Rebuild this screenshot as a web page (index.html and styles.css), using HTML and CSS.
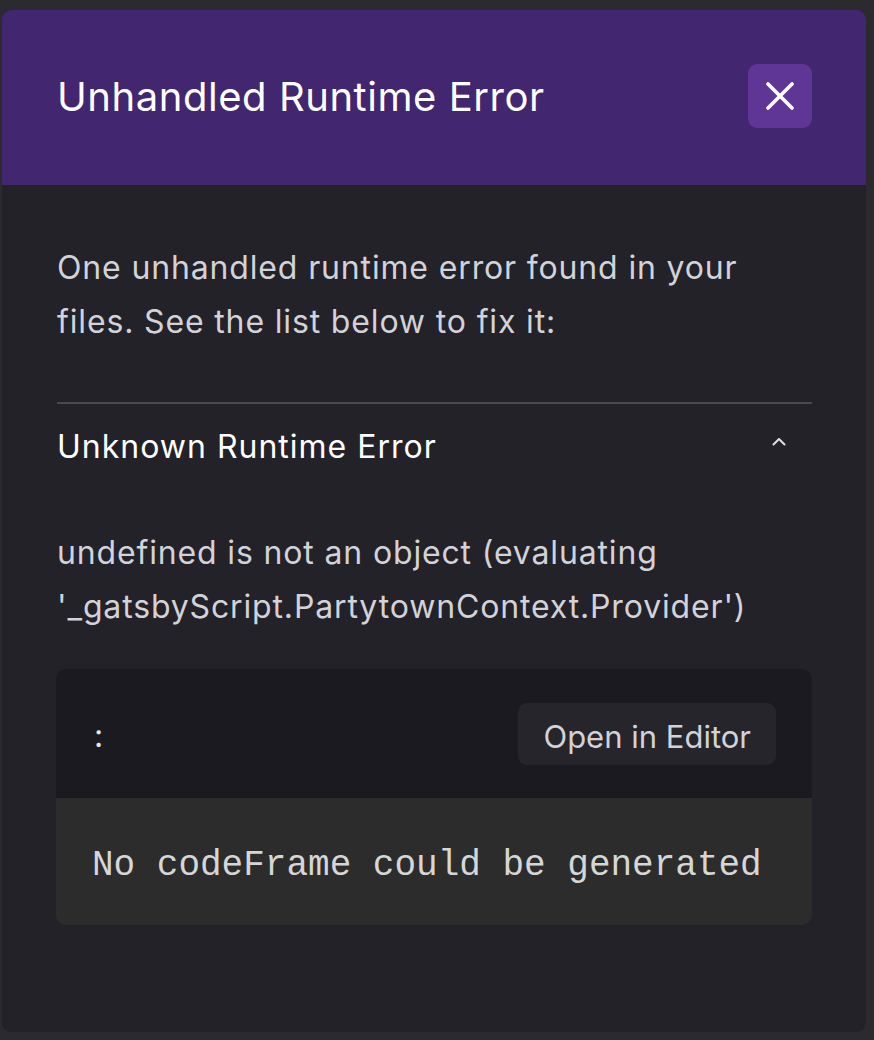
FILE: index.html
```html
<!DOCTYPE html>
<html lang="en">
<head>
<meta charset="utf-8">
<title>Unhandled Runtime Error</title>
<link rel="stylesheet" href="styles.css">
</head>
<body>
<div class="modal">
  <header class="modal-header">
    <h1 class="title">Unhandled Runtime Error</h1>
    <button class="close" aria-label="Close">
      <svg width="28" height="28" viewBox="0 0 28 28"><path d="M2 2 L26 26 M26 2 L2 26" stroke="#fff" stroke-width="3.6" stroke-linecap="round" fill="none"/></svg>
    </button>
  </header>
  <div class="modal-body">
    <p class="intro">One unhandled runtime error found in your files. See the list below to fix it:</p>
    <div class="error">
      <div class="error-head">
        <h2 class="error-title">Unknown Runtime Error</h2>
        <svg class="chevron" width="14" height="9" viewBox="0 0 14 9"><path d="M1.5 7.5 L7 2 L12.5 7.5" stroke="#e0e0e4" stroke-width="2" fill="none" stroke-linecap="round" stroke-linejoin="round"/></svg>
      </div>
      <p class="message">undefined is not an object (evaluating '_gatsbyScript.PartytownContext.Provider')</p>
      <div class="codeframe">
        <div class="codeframe-head">
          <span class="file">:</span>
          <button class="open-editor">Open in Editor</button>
        </div>
        <pre class="code">No codeFrame could be generated</pre>
      </div>
    </div>
  </div>
</div>
</body>
</html>
```

FILE: styles.css
```css
html, body {
  margin: 0;
  padding: 0;
  background: #2b2a2e;
}
body {
  padding: 10px 8px 8px 2px;
  font-family: Inter, "Noto Sans", sans-serif;
}
.modal {
  width: 864px;
  height: 1022px;
  background: #232229;
  border-radius: 9px;
  overflow: hidden;
  box-sizing: border-box;
}
.modal-header {
  height: 175px;
  background: #422670;
  display: flex;
  align-items: center;
  justify-content: space-between;
  padding: 0 54px 2px 55px;
  box-sizing: border-box;
}
.title {
  margin: 0;
  font-size: 40px;
  font-weight: 400;
  color: #ffffff;
  letter-spacing: 0.55px;
}
.close {
  width: 64px;
  height: 64px;
  border: none;
  border-radius: 9px;
  background: #5f3596;
  display: flex;
  align-items: center;
  justify-content: center;
  padding: 0;
  cursor: pointer;
  margin-top: -2px;
}
.modal-body {
  padding: 56px 54px 0 55px;
}
.intro {
  margin: 0;
  font-size: 32px;
  line-height: 54px;
  letter-spacing: 0.85px;
  color: #d2d2d8;
  padding-bottom: 53px;
  border-bottom: 2px solid #4a4950;
}
.error-head {
  display: flex;
  align-items: center;
  justify-content: space-between;
  margin-top: 16px;
  padding-right: 26px;
}
.error-title {
  margin: 0;
  font-size: 32px;
  line-height: 54px;
  font-weight: 400;
  letter-spacing: 1px;
  color: #ffffff;
}
.chevron {
  margin-top: -12px;
}
.message {
  margin: 52px 0 0;
  font-size: 32px;
  line-height: 54px;
  letter-spacing: 0.85px;
  color: #d2d2d8;
}
.codeframe {
  margin-top: 35px;
  margin-left: -1px;
  border-radius: 10px;
  overflow: hidden;
}
.codeframe-head {
  background: #1b1a20;
  height: 129px;
  box-sizing: border-box;
  display: flex;
  align-items: center;
  justify-content: space-between;
  padding: 0 36px 0 38px;
}
.file {
  font-size: 32px;
  color: #e6e6ea;
  margin-top: 4px;
}
.open-editor {
  font-family: inherit;
  font-size: 31px;
  line-height: 32px;
  letter-spacing: 0;
  color: #d2d2d8;
  background: #26252b;
  border: none;
  border-radius: 9px;
  padding: 18px 25px 12px;
  height: 62px;
  box-sizing: border-box;
}
.code {
  margin: 0;
  background: #2c2c2d;
  height: 127px;
  box-sizing: border-box;
  padding: 46px 36px 0;
  font-family: "Liberation Mono", "Courier New", monospace;
  font-size: 36px;
  line-height: 44px;
  color: #d6d6d6;
}
```
